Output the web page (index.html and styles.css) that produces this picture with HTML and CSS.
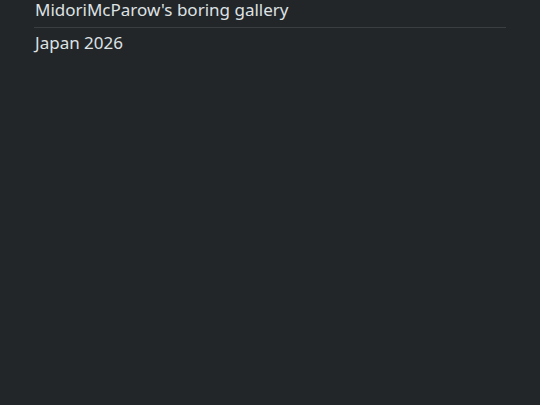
FILE: index.html
```html
<!DOCTYPE html>
<html lang="en">
<head>
    <meta charset="UTF-8">
    <meta name="viewport" content="width=device-width, initial-scale=1.0">
    <title>MidoriMcParow's boring gallery</title>
    <link rel="stylesheet" href="styles.css">
</head>
<body>
    <div class="page">
        <header class="site-header">
            <h1 class="site-title">MidoriMcParow's boring gallery</h1>
        </header>
        <main class="albums">
            <a class="album-link" href="#">Japan 2026</a>
        </main>
    </div>
</body>
</html>
```

FILE: styles.css
```css
html, body {
    margin: 0;
    padding: 0;
    background: #222629;
    color: #dfe1e3;
    font-family: "Noto Sans", "Open Sans", sans-serif;
}

.page {
    margin: 0 34px;
}

.site-header {
    border-bottom: 1px solid #3a3e41;
    padding: 0 0 7px 1px;
}

.site-title {
    margin: 0;
    font-size: 17px;
    font-weight: 400;
    line-height: 20px;
}

.albums {
    padding: 4px 0 0 1px;
}

.album-link {
    display: block;
    color: #dfe1e3;
    text-decoration: none;
    font-size: 17px;
    line-height: 22px;
}
```
